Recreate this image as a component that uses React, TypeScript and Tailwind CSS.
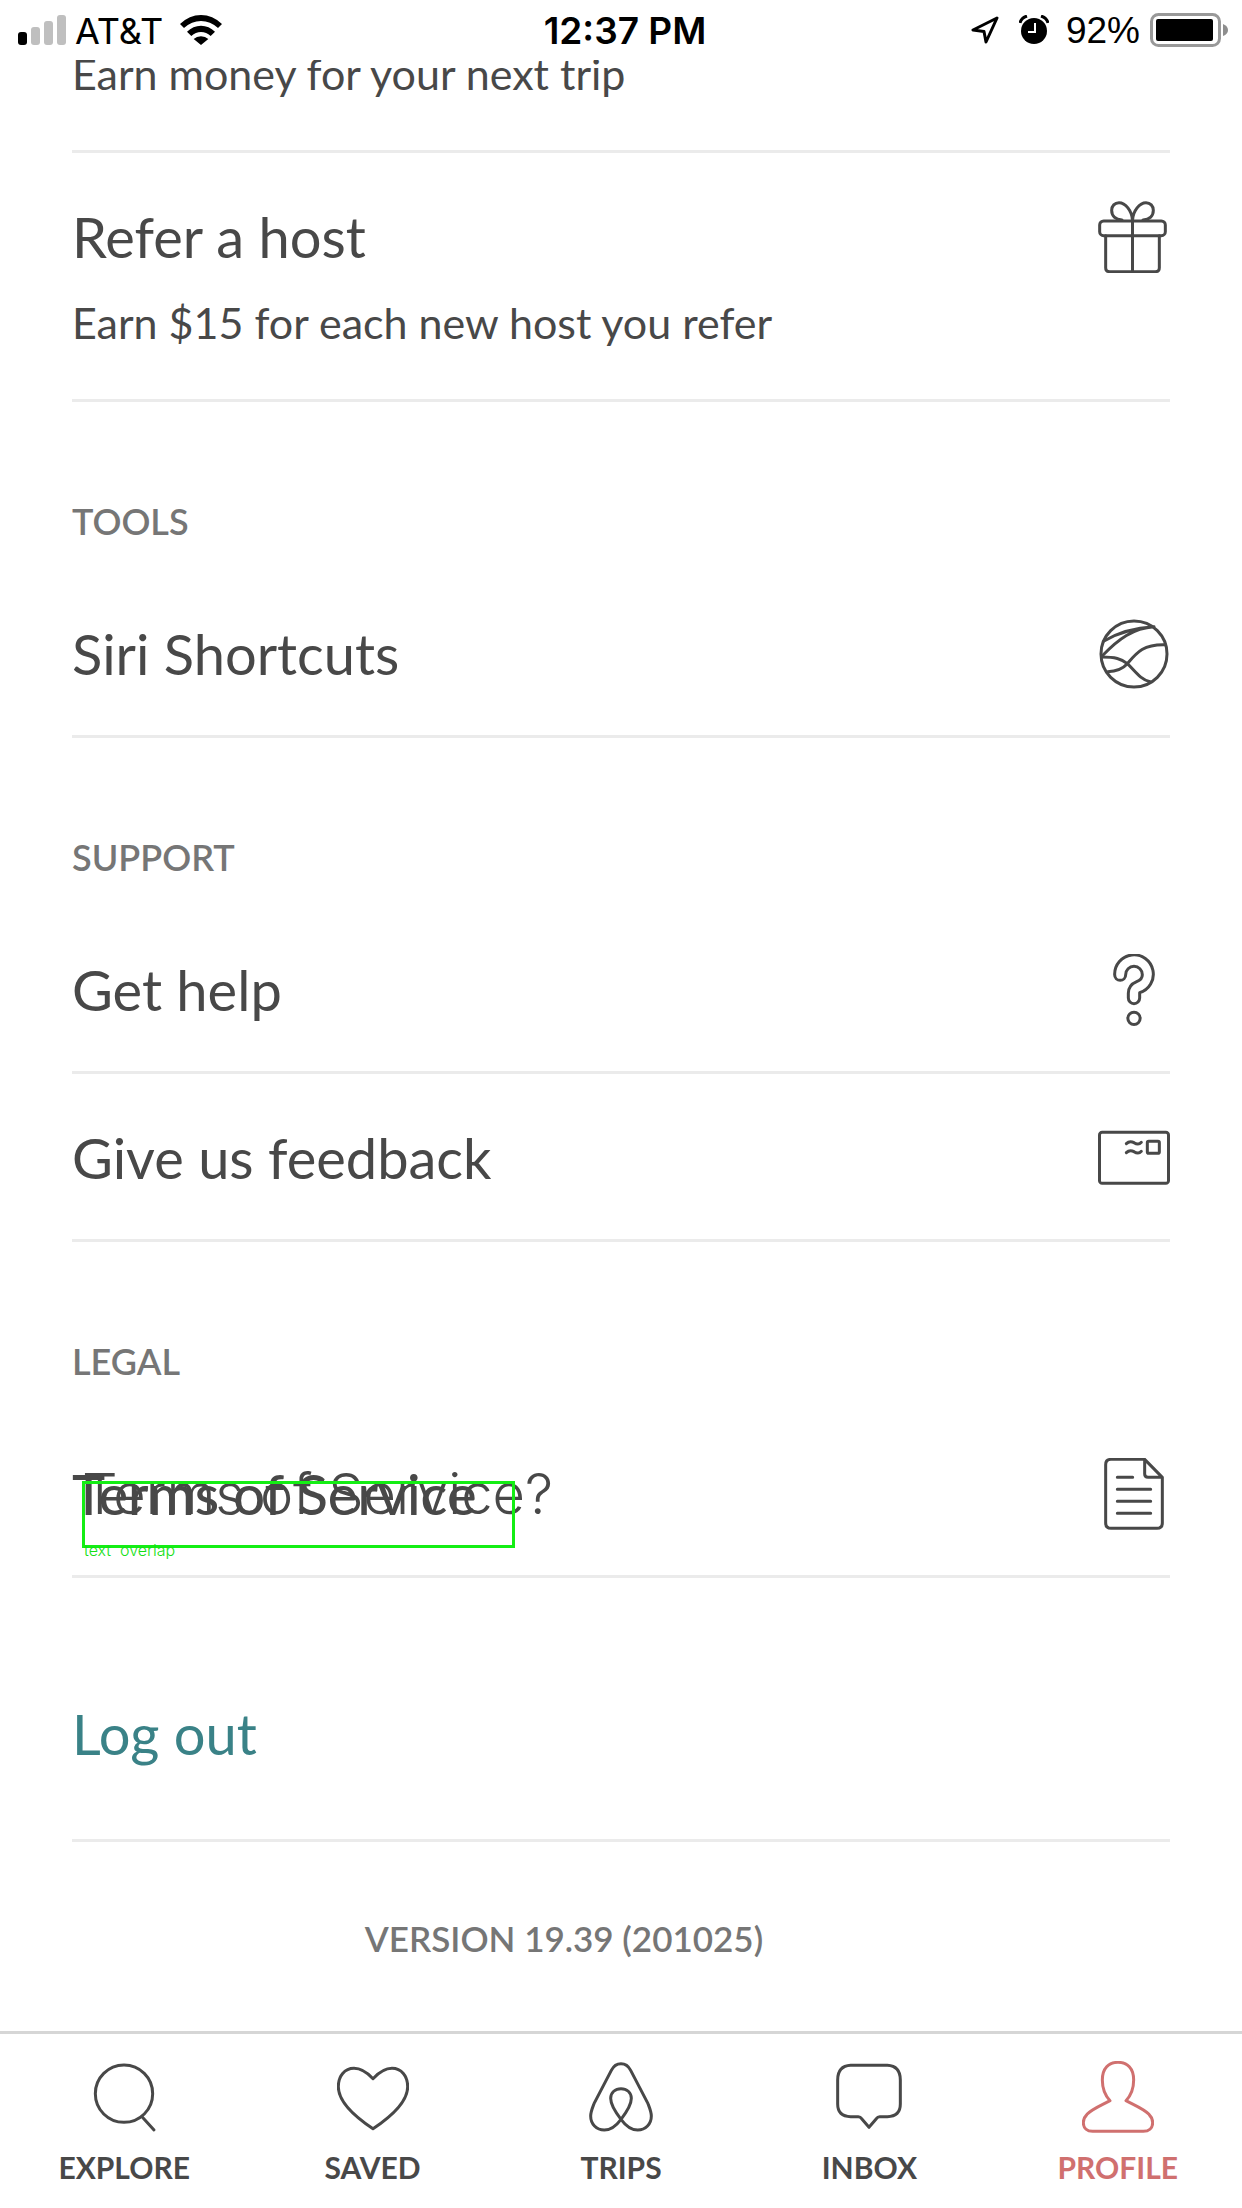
import type { ReactNode } from 'react';

function RowIcon({ y, children }: { y: number; children: ReactNode }) {
  return (
    <svg
      viewBox={`114 ${y} 216 216`}
      className="size-[72px] shrink-0"
      fill="none"
      stroke="currentColor"
      strokeWidth="9"
      strokeLinecap="round"
      strokeLinejoin="round"
      aria-hidden="true"
    >
      {children}
    </svg>
  );
}

const GiftIcon = () => (
  <RowIcon y={62}>
    <rect x="119" y="122" width="197" height="44" rx="12" />
    <path d="M137 166V262Q137 274 149 274H286Q298 274 298 262V166M217.500 122V274" />
    <path d="M217 117C215 92 197 67 177 67C164 67 155 77 155 90C155 108 168 118 186 119M218 117C220 92 238 67 258 67C271 67 280 77 280 90C280 108 267 118 249 119" />
  </RowIcon>
);

const SiriIcon = () => (
  <RowIcon y={54}>
    <circle cx="222" cy="162" r="99" />
    <path d="M132 123C172 99 222 83 282 80M127 167C175 117 220 84 282 80" />
    <path d="M126 171C165 171 184 176 202 191C225 212 240 238 270 245" />
    <path d="M143 215C168 214 186 209 202 191C230 158 250 132 316 134" />
  </RowIcon>
);

const HelpIcon = () => (
  <RowIcon y={42}>
    <path d="M164 104A58 58 0 1 1 239 158V174A17 17 0 0 1 205 174V160C205 138 218 130 230 125C240 121 247 114 247 104A25 25 0 0 0 197 104A16.500 17 0 0 1 164 104Z" />
    <circle cx="222" cy="235" r="18.500" />
  </RowIcon>
);

const MailIcon = () => (
  <RowIcon y={36}>
    <rect x="118.500" y="67" width="207" height="153" rx="8" />
    <rect x="262" y="94" width="36" height="36" rx="4" />
    <path d="M199 101C206 94 213 93 222 98C231 104 237 105 244 97M199 128C206 121 213 120 222 125C231 131 237 132 244 124" />
  </RowIcon>
);

const DocumentIcon = () => (
  <RowIcon y={54}>
    <path d="M254 58H153Q137 58 137 74V249Q137 265 153 265H291Q307 265 307 249V112ZM254 58V102Q254 112 264 112H307" />
    <path d="M172 112H218M172 148H272M172 184H272M172 220H272" />
  </RowIcon>
);

function Row({ title, subtitle, icon }: { title: ReactNode; subtitle?: string; icon: ReactNode }) {
  return (
    <li className="border-b-3 border-[#ebebeb]">
      <button
        type="button"
        className={subtitle ? 'block w-full pt-12 pb-[46px] text-left' : 'block w-full pt-12 pb-[45px] text-left'}
      >
        <span className="flex items-center justify-between">
          <span className="text-[56px] leading-[72px]">{title}</span>
          {icon}
        </span>
        {subtitle && <span className="mt-5 block text-[43px] leading-[60px]">{subtitle}</span>}
      </button>
    </li>
  );
}

function Section({ title, children }: { title: string; children: ReactNode }) {
  return (
    <section>
      <h2 className="pt-[99px] pb-[29px] text-[36px] leading-10 font-semibold text-[#767676]">{title}</h2>
      <ul>{children}</ul>
    </section>
  );
}

function TermsTitle() {
  return (
    <span className="relative block font-medium whitespace-nowrap">
      Terms of Service
      <span className="absolute top-0 left-[10px] font-['Inter',sans-serif] font-light">Terms of Service?</span>
      <span className="absolute top-[23px] left-[10px] h-[67px] w-[433px] border-3 border-[#14ee14]" />
      <span className="absolute top-[82px] left-[12px] font-['Inter',sans-serif] text-[16px] leading-5 font-light text-[#14e014]">
        text&nbsp; overlap
      </span>
    </span>
  );
}

function StatusBar() {
  return (
    <header className="relative z-10 grid h-[60px] grid-cols-[1fr_auto_1fr] items-center bg-white pr-[14px] pl-[18px] font-['Inter',sans-serif] text-black">
      <div className="flex items-center">
        <div className="flex h-[30px] items-end gap-1">
          <span className="h-[13px] w-[9px] rounded-[3px] bg-black" />
          <span className="h-[18px] w-[9px] rounded-[3px] bg-[#bfbfbf]" />
          <span className="h-6 w-[9px] rounded-[3px] bg-[#bfbfbf]" />
          <span className="h-[30px] w-[9px] rounded-[3px] bg-[#bfbfbf]" />
        </div>
        <span className="ml-[9px] pt-0.5 text-[36px] leading-10">AT&amp;T</span>
        <svg viewBox="0 0 126 90" className="ml-[17px] h-[30px] w-[42px]" aria-label="Wi-Fi">
          <path d="M0 27Q28 0 63 0T126 27L114 39Q91 18 63 18T12 39ZM21 50Q39 32 63 32T105 50L92 63Q79 51 63 51T34 63ZM41 72Q50 64 63 64T85 72L63 90Z" />
        </svg>
      </div>
      <span className="pt-0.5 pl-1 text-[37px] leading-10 font-semibold">12:37 PM</span>
      <div className="flex items-center justify-end">
        <svg viewBox="0 0 28 28" className="size-7" fill="none" stroke="black" strokeWidth="3" strokeLinejoin="round" aria-label="Location">
          <path d="M26 2L2 14L13 15.500L15 26Z" />
        </svg>
        <svg viewBox="0 0 30 30" className="ml-[20px] size-[30px]" aria-label="Alarm">
          <circle cx="15" cy="16" r="13" />
          <path d="M1 8Q2 3 8 1M29 8Q28 3 22 1" fill="none" stroke="black" strokeWidth="3" />
          <path d="M16 8V17H9" fill="none" stroke="white" strokeWidth="2" />
        </svg>
        <span className="ml-[17px] pt-0.5 font-['Liberation_Sans',sans-serif] text-[37px] leading-10">92%</span>
        <svg viewBox="0 0 78 34" className="ml-[10px] h-[34px] w-[78px]" aria-label="Battery">
          <rect x="1.500" y="1.500" width="68" height="31" rx="7" fill="none" stroke="#999" strokeWidth="3" />
          <rect x="6" y="6" width="57" height="22" rx="2" />
          <path d="M73 11Q78 13 78 17T73 23Z" fill="#8e8e8e" />
        </svg>
      </div>
    </header>
  );
}

const tabs: { label: string; active?: boolean; drawing: ReactNode }[] = [
  { label: 'EXPLORE', drawing: <><circle cx="0" cy="221" r="86" /><path d="M54 290L90 330" /></> },
  {
    label: 'SAVED',
    drawing: <path d="M0 176C-20 155 -38 145 -57 145C-85 145 -104 168 -104 200C-104 240 -60 286 0 326C60 286 104 240 104 200C104 168 85 145 57 145C38 145 20 155 0 176Z" />,
  },
  {
    label: 'TRIPS',
    drawing: <path d="M0 298C18 275 31 255 31 235C31 217 17 206 0 206C-17 206 -31 217 -31 235C-31 255 -18 275 0 298C16 320 32 330 50 330C74 330 91 312 91 288C91 276 86 264 81 251L29 151C22 137 12 131 0 131C-12 131 -22 137 -29 151L-81 251C-86 264 -91 276 -91 288C-91 312 -74 330 -50 330C-32 330 -16 320 0 298Z" />,
  },
  {
    label: 'INBOX',
    drawing: <path d="M-55 136H55Q94 138 94 180V252Q94 289 55 290H32Q26 290 22 296L0 322L-22 296Q-26 290 -32 290H-55Q-94 289 -94 252V180Q-94 138 -55 136Z" />,
  },
  {
    label: 'PROFILE',
    active: true,
    drawing: <path d="M-24 242C-40 225 -47 205 -47 180C-47 145 -28 127 0 127C28 127 47 145 47 180C47 205 40 225 24 242C50 256 78 267 93 283C101 291 104 300 104 308C104 325 92 334 76 334H-76C-92 334 -104 325 -104 308C-104 300 -101 291 -93 283C-78 267 -50 256 -24 242Z" />,
  },
];

function TabBar() {
  return (
    <nav className="mt-auto grid grid-cols-5 border-t-3 border-[#d6d6d6] pt-[27px] pb-[23px]">
      {tabs.map(({ label, active, drawing }) => (
        <button
          key={label}
          type="button"
          className={active ? 'flex flex-col items-center gap-4 text-[#d0706f]' : 'flex flex-col items-center gap-4'}
        >
          <svg
            viewBox="-108 123 216 216"
            className="size-[72px]"
            fill="none"
            stroke="currentColor"
            strokeWidth="9"
            strokeLinecap="round"
            strokeLinejoin="round"
            aria-hidden="true"
          >
            {drawing}
          </svg>
          <span className="text-[30px] leading-9 font-bold">{label}</span>
        </button>
      ))}
    </nav>
  );
}

export default function App() {
  return (
    <div className="flex min-h-screen flex-col bg-white font-['Lato',sans-serif] text-[#484848]">
      <StatusBar />
      <main className="-mt-4 px-[72px]">
        <p className="border-b-3 border-[#ebebeb] pb-[46px] text-[43px] leading-[60px]">Earn money for your next trip</p>
        <ul>
          <Row title="Refer a host" subtitle="Earn $15 for each new host you refer" icon={<GiftIcon />} />
        </ul>
        <Section title="TOOLS">
          <Row title="Siri Shortcuts" icon={<SiriIcon />} />
        </Section>
        <Section title="SUPPORT">
          <Row title="Get help" icon={<HelpIcon />} />
          <Row title="Give us feedback" icon={<MailIcon />} />
        </Section>
        <Section title="LEGAL">
          <Row title={<TermsTitle />} icon={<DocumentIcon />} />
        </Section>
        <div className="border-b-3 border-[#ebebeb] pt-[120px] pb-[69px]">
          <button type="button" className="block text-[56px] leading-[72px] text-[#3a8287]">
            Log out
          </button>
        </div>
        <p className="pt-[76px] pr-[114px] pb-[73px] text-center text-[35px] leading-10 font-semibold text-[#767676]">
          VERSION 19.39 (201025)
        </p>
      </main>
      <TabBar />
    </div>
  );
}
